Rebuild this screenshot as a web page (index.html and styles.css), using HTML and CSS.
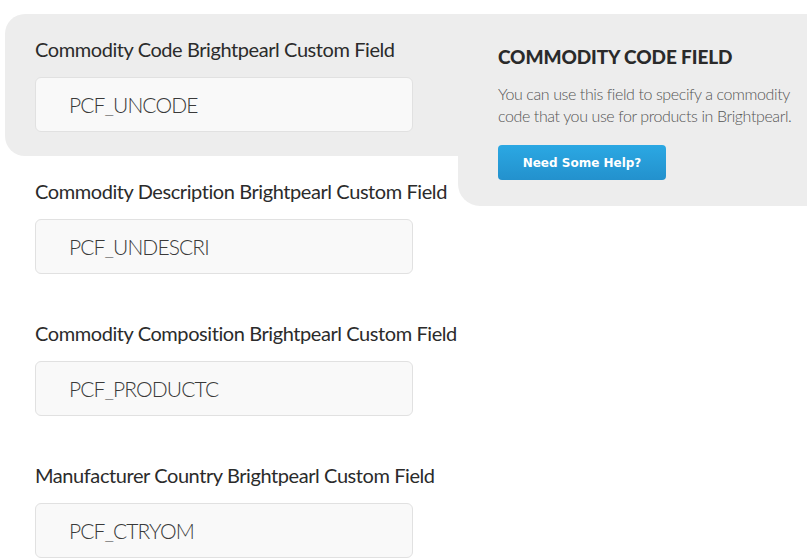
FILE: index.html
```html
<!DOCTYPE html>
<html lang="en">
<head>
<meta charset="utf-8">
<title>Brightpearl Custom Fields</title>
<link rel="stylesheet" href="styles.css">
</head>
<body>
<div class="form">
  <div class="row active">
    <div class="field">
      <label class="label" for="f1">Commodity Code Brightpearl Custom Field</label>
      <input class="input" id="f1" type="text" value="PCF_UNCODE">
    </div>
    <aside class="help">
      <h2 class="help-title">COMMODITY CODE FIELD</h2>
      <p class="help-text">You can use this field to specify a commodity<br>code that you use for products in Brightpearl.</p>
      <button class="help-btn" type="button">Need Some Help?</button>
    </aside>
  </div>
  <div class="row">
    <div class="field">
      <label class="label" for="f2">Commodity Description Brightpearl Custom Field</label>
      <input class="input" id="f2" type="text" value="PCF_UNDESCRI">
    </div>
  </div>
  <div class="row">
    <div class="field">
      <label class="label" for="f3">Commodity Composition Brightpearl Custom Field</label>
      <input class="input" id="f3" type="text" value="PCF_PRODUCTC">
    </div>
  </div>
  <div class="row">
    <div class="field">
      <label class="label" for="f4">Manufacturer Country Brightpearl Custom Field</label>
      <input class="input" id="f4" type="text" value="PCF_CTRYOM">
    </div>
  </div>
</div>
</body>
</html>
```

FILE: styles.css
```css
html, body {
  margin: 0;
  padding: 0;
  background: #ffffff;
}
body {
  font-family: Lato, "Open Sans", sans-serif;
  color: #2e2e2e;
  overflow: hidden;
}
.form {
  margin: 14px 0 0 5px;
}
.row {
  display: flex;
  align-items: flex-start;
  height: 142px;
}
.row.active {
  background: #ededed;
  border-radius: 20px 0 0 20px;
}
.field {
  width: 453px;
  box-sizing: border-box;
  padding: 23px 0 0 30px;
  display: flex;
  flex-direction: column;
}
.label {
  display: block;
  font-size: 20px;
  line-height: 24px;
  font-weight: 400;
  letter-spacing: -0.42px;
  color: #2b2b2b;
  margin-bottom: 16px;
  white-space: nowrap;
}
.input {
  box-sizing: border-box;
  width: 378px;
  height: 55px;
  margin: 0;
  padding: 0 0 0 33px;
  background: #f9f9f9;
  border: 1px solid #e1e1e1;
  border-radius: 6px;
  font-family: Lato, "Open Sans", sans-serif;
  font-size: 21px;
  font-weight: 300;
  letter-spacing: -0.9px;
  color: #3a3a3a;
  outline: none;
}
.help {
  flex: 1;
  height: 192px;
  margin-bottom: -50px;
  box-sizing: border-box;
  background: #ededed;
  border-bottom-left-radius: 22px;
  padding: 31px 0 0 40px;
  position: relative;
  z-index: 1;
}
.help-title {
  margin: 0 0 14px;
  font-size: 19px;
  line-height: 24px;
  font-weight: 900;
  letter-spacing: -0.1px;
  color: #2a2a2a;
  white-space: nowrap;
}
.help-text {
  margin: 0 0 18px;
  font-size: 16px;
  line-height: 22px;
  font-weight: 300;
  letter-spacing: -0.4px;
  color: #555555;
  white-space: nowrap;
}
.help-btn {
  display: block;
  width: 168px;
  height: 35px;
  padding: 0;
  border: 0;
  border-radius: 4px;
  background: linear-gradient(#2ba8e3, #2391cd);
  color: #ffffff;
  font-family: "DejaVu Sans", Verdana, sans-serif;
  font-size: 12px;
  font-weight: 700;
  cursor: pointer;
}
```
